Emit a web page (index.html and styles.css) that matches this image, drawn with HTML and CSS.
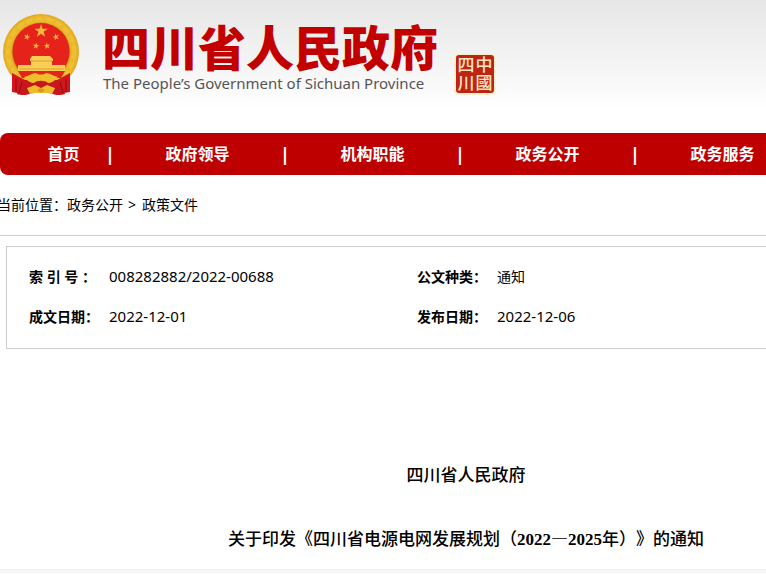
FILE: index.html
```html
<!DOCTYPE html>
<html lang="zh-CN">
<head>
  <meta charset="UTF-8">
  <meta name="viewport" content="width=device-width, initial-scale=1.0">
  <title>四川省人民政府</title>
  <link rel="stylesheet" href="styles.css">
</head>
<body>
  <header class="header">
    <svg class="emblem" viewBox="0 0 76 82" aria-hidden="true">
      <defs>
        <radialGradient id="gold" cx="50%" cy="50%" r="50%">
          <stop offset="74%" stop-color="#c98a12"/>
          <stop offset="79%" stop-color="#e9b52a"/>
          <stop offset="92%" stop-color="#edb92a"/>
          <stop offset="100%" stop-color="#dfa621"/>
        </radialGradient>
        <path id="star" d="M0-1 .225-.31 .951-.309 .363.118 .588.809 0 .382-.588.809-.363.118-.951-.309-.225-.31Z"/>
      </defs>
      <circle cx="38" cy="38" r="38" fill="url(#gold)"/>
      <circle cx="38" cy="38" r="33" fill="none" stroke="#f8d84b" stroke-width="4" stroke-dasharray="7 3" opacity=".25"/>
      <circle cx="38" cy="37.500" r="28.500" fill="#e5231b"/>
      <g fill="#f3b93b">
        <use href="#star" transform="translate(38 17) scale(7)"/>
        <use href="#star" transform="translate(24 23) rotate(15) scale(3.500)"/>
        <use href="#star" transform="translate(53 23) rotate(-15) scale(3.500)"/>
        <use href="#star" transform="translate(33 32) rotate(8) scale(3.500)"/>
        <use href="#star" transform="translate(44 32) rotate(-8) scale(3.500)"/>
      </g>
      <path d="M29 42h18l3 3v2h-1v4h13v6H15v-6h13v-4h-1v-2z" fill="#f7cf55"/>
      <path d="M28 47h21M16 55h45" stroke="#e59a35" stroke-width="1"/>
      <path d="M15 57h47l-4 7H19z" fill="#e5231b"/>
      <path d="M9 59l13 7-2 14-11-2zM67 59l-13 7 2 14 11-2z" fill="#d3161b"/>
      <path d="M18 66h40l4 14c-6 2-10 1-15-1H29c-5 2-9 3-15 1z" fill="#c8171c"/>
      <path d="M13 65v13M19 68l-3 11M57 68l3 11M63 65v13" stroke="#8f0d12" stroke-width="1"/>
      <path d="M21 63c5-1 8-4 12-4 3 2 7 2 10 0 4 0 7 3 12 4-3 4-7 6-10 6-3-3-11-3-14 0-3 0-7-2-10-6z" fill="#f0bd2c"/>
      <path d="M24 74l8-3 6 3 6-3 8 3-3 6-5-1H32l-5 1z" fill="#eebb2c"/>
      <path d="M34 76l4-2 4 2-4 3z" fill="#d79720"/>
    </svg>
    <div class="brand">
      <h1>四川省人民政府</h1>
      <p>The People’s Government of Sichuan Province</p>
    </div>
    <svg class="seal" viewBox="0 0 42 42" role="img" aria-label="中国四川">
      <rect x="0" y="0" width="42" height="42" rx="5" fill="#fbf0cd"/>
      <rect x="2" y="2" width="38" height="38" rx="3" fill="#bd2413"/>
      <g class="seal-text">
        <text x="12" y="18">四</text>
        <text x="30" y="18">中</text>
        <text x="12" y="36">川</text>
        <text x="30" y="36">國</text>
      </g>
    </svg>
  </header>

  <nav class="nav">
    <ul>
      <li><a href="#">首页</a></li>
      <li><a href="#">政府领导</a></li>
      <li><a href="#">机构职能</a></li>
      <li><a href="#">政务公开</a></li>
      <li><a href="#">政务服务</a></li>
    </ul>
  </nav>

  <div class="location">当前位置：<a href="#">政务公开</a><span class="sep">&gt;</span><a href="#">政策文件</a></div>

  <main>
    <div class="info">
      <table>
        <tr>
          <th scope="row">索&nbsp;引&nbsp;号&nbsp;：</th>
          <td class="num">008282882/2022-00688</td>
          <th scope="row">公文种类：</th>
          <td>通知</td>
        </tr>
        <tr>
          <th scope="row">成文日期：</th>
          <td class="num">2022-12-01</td>
          <th scope="row">发布日期：</th>
          <td class="num">2022-12-06</td>
        </tr>
      </table>
    </div>

    <article class="article">
      <h2>四川省人民政府</h2>
      <h2>关于印发《四川省电源电网发展规划（<span class="year">2022</span>—<span class="year">2025</span>年）》的通知</h2>
    </article>
  </main>
  <div class="bottom"></div>
</body>
</html>
```

FILE: styles.css
```css
* {
  box-sizing: border-box;
}
body {
  margin: 0;
  min-height: 100vh;
  display: flex;
  flex-direction: column;
  overflow-x: hidden;
  background: #fff;
  color: #000;
  font-family: "Noto Sans", "Noto Sans CJK SC", sans-serif;
  font-size: 14px;
}
a {
  color: inherit;
  text-decoration: none;
}
.header {
  display: flex;
  align-items: flex-start;
  height: 133px;
  padding: 14px 3px 0;
  background: linear-gradient(#e6e6e6, #fff 110px);
}
.emblem {
  width: 76px;
  height: 82px;
  flex: none;
}
.brand {
  margin-left: 23px;
  white-space: nowrap;
}
.brand h1 {
  margin: 0;
  padding-top: 5px;
  font-family: "Noto Sans CJK SC", sans-serif;
  font-size: 48px;
  font-weight: 900;
  line-height: 52px;
  color: #c30000;
}
.brand p {
  margin: 0;
  padding-left: 1px;
  font-size: 15px;
  line-height: 24px;
  color: #555;
}
.seal {
  width: 42px;
  height: 42px;
  margin: 39px 0 0 16px;
  flex: none;
}
.seal-text {
  font-family: "Noto Sans CJK TC", sans-serif;
  font-size: 17px;
  font-weight: 500;
  text-anchor: middle;
  fill: #fbe6c0;
}
.nav {
  overflow: hidden;
  border-radius: 8px 0 0 8px;
  background: #be0000;
}
.nav ul {
  display: flex;
  margin: 0;
  padding: 0 0 0 17px;
  list-style: none;
}
.nav li {
  position: relative;
  flex: none;
  width: 175px;
  line-height: 42px;
  text-align: center;
  font-size: 16px;
  font-weight: bold;
  color: #fff;
}
.nav li:first-child {
  width: 93px;
}
.nav li + li::before {
  content: "|";
  position: absolute;
  left: -5px;
  font-size: 18px;
}
.location {
  margin-left: -3px;
  line-height: 60px;
  border-bottom: 1px solid #ccc;
}
.location .sep {
  margin: 0 6px 0 5px;
}
.info {
  margin: 10px 0 0 6px;
  padding: 9px 0 12px 22px;
  border: 1px solid #ccc;
  border-right: none;
}
.info table {
  width: 100%;
  border-collapse: collapse;
}
.info th,
.info td {
  height: 40px;
  padding: 0;
  text-align: left;
  white-space: nowrap;
}
.info th {
  width: 80px;
}
.info td:nth-child(2) {
  width: 308px;
}
.info .num {
  font-size: 15px;
}
.article {
  padding: 96px 0 0 166px;
  text-align: center;
}
.article h2 {
  margin: 0 0 6px;
  font-family: "Noto Sans CJK SC", sans-serif;
  font-size: 17px;
  font-weight: 500;
  line-height: 58px;
  text-spacing-trim: space-all;
}
.article h2:last-child {
  margin-bottom: 0;
}
.article .year {
  font-family: "Liberation Serif", serif;
  font-weight: bold;
}
.bottom {
  flex: 1;
  border-top: 1px solid #eee;
  background: #f8f8f8;
}
```
